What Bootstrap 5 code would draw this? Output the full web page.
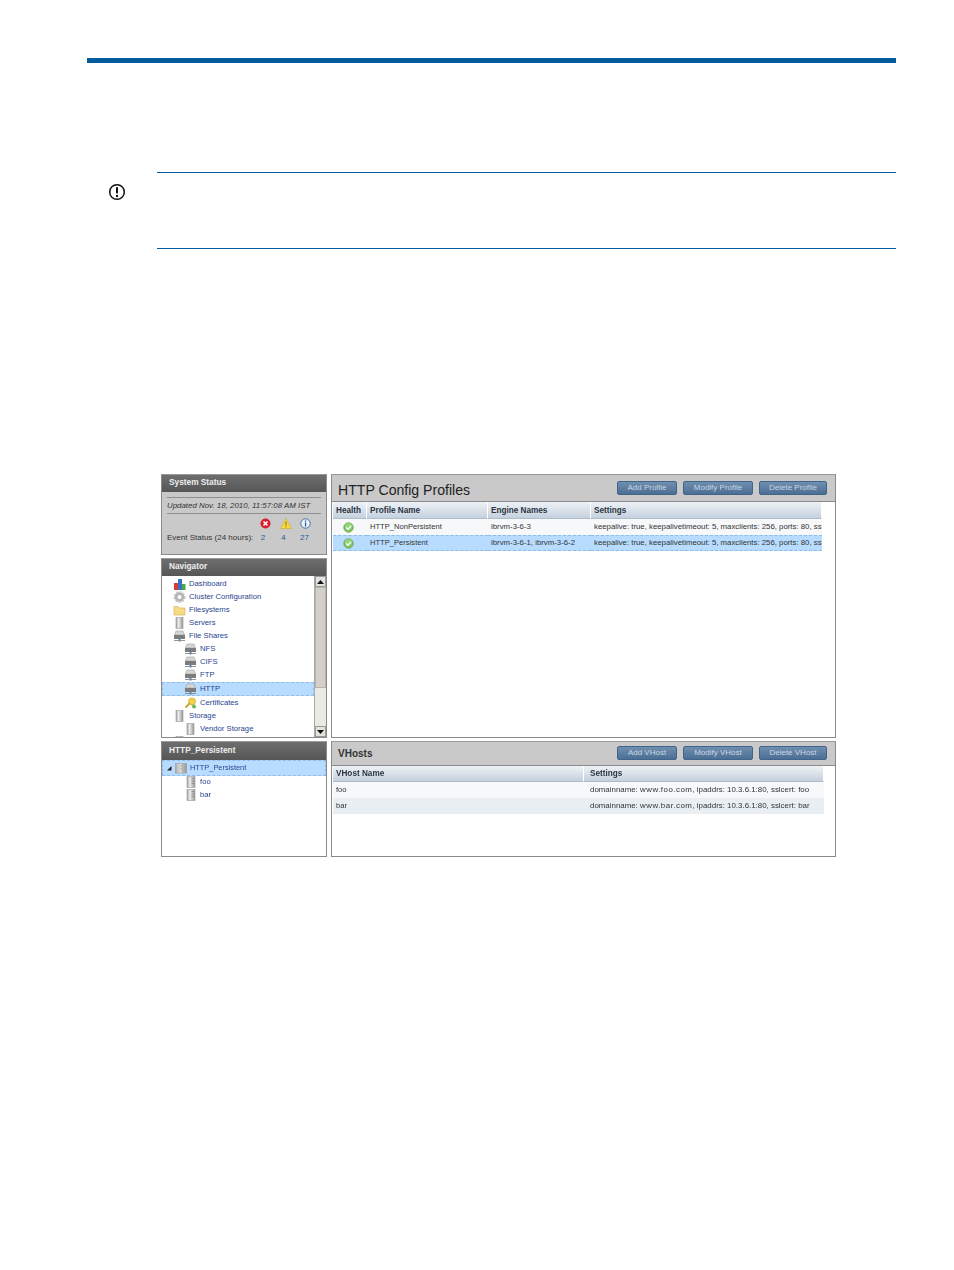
<!DOCTYPE html>
<html lang="en">
<head>
<meta charset="utf-8">
<title>HTTP Config Profiles</title>
<link href="https://cdn.jsdelivr.net/npm/bootstrap@5.3.0/dist/css/bootstrap.min.css" rel="stylesheet">
<style>
body{background:#fff;font-family:"Liberation Sans",Arial,sans-serif;color:#222;margin:0}
.pg{padding:58px 58px 0 87px}
.toprule{height:5px;background:#005a9c}
.note{margin-top:109px;display:flex}
.note-ic{width:70px;padding:7px 0 0 21px;height:76px}
.note-body{flex:1;height:77px;border-top:1px solid #005a9c;border-bottom:1px solid #005a9c}
.shot{margin:225px 0 0 74px;width:675px;display:grid;grid-template-columns:166px 505px;column-gap:4px;grid-template-rows:264px 116px;row-gap:3px;font-size:7.7px;line-height:1;filter:blur(.3px)}
.leftcol{display:flex;flex-direction:column;gap:3px;min-height:0}
.pnl{border:1px solid #8a8a8a;border-top-color:#999;background:#fff;overflow:hidden;position:relative}
.hd{height:17px;background:linear-gradient(#6e6e6e,#565656);color:#eee;font-weight:700;padding:0 0 2px 7px;display:flex;align-items:center;font-size:8.3px}
.status{height:81px;background:#c9c9c9}
.stline{margin:5px 5px 0;border-top:1px solid #8f8f8f;border-bottom:1px solid #8f8f8f;height:17px;display:flex;align-items:center;font-style:italic;color:#333;font-size:7.900px;white-space:nowrap}
.evgrid{display:grid;grid-template-columns:88px 21px 20px 19px;padding:4px 0 0 5px;color:#333;row-gap:5px;justify-items:center;align-items:center;font-size:8px}
.evgrid .lbl{justify-self:start;white-space:nowrap}
.evgrid .num{color:#2c5a94;margin-right:5px}
.evgrid .num.w{margin-right:2px}
.navp{height:180px}
.treewrap{display:flex;height:161px;overflow:hidden}
.tree{flex:1;padding-top:1px;min-width:0;overflow:hidden}
.trow{height:13.1px;display:flex;align-items:center;color:#2a4590;white-space:nowrap;padding-left:11px;gap:3px}
.trow svg{flex:none}
.trow.l2{padding-left:22px}
.trow.sel{background:#b8dcff;outline:1px dashed #8fbde8;outline-offset:-1px;height:14.5px}
.sbar{width:12px;background:#ebe9e3;display:flex;flex-direction:column;justify-content:space-between;border-left:1px solid #aaa}
.sbtn{height:11px;background:#e4e2dc;border:1px solid #999;display:flex;align-items:center;justify-content:center}
.sthumb{flex:1;background:#d2d0c8;border:1px solid #b5b3ab;margin-bottom:38px}
.strack{flex:1;display:flex;flex-direction:column}
.tree2{height:116px}
.tree2 .hd{height:18px}
.rootrow{padding-left:4px;gap:3px;height:15.500px}
.rootrow.sel{height:15.500px;font-size:7.400px}
.trow.leaf{padding-left:24px;gap:4px;margin-top:0}
.phd{background:#c9c9c9;display:flex;align-items:center;justify-content:space-between;border-bottom:1px solid #8a8a8a}
.phd1{height:27px}
.phd1 .ttl{padding-top:4px}
.phd1+.gridtbl .gh{height:17px;padding-top:2px}
.phd2{height:24px}
.phd2 .acts{padding-bottom:2px}
.ttl{font-size:14.100px;color:#222;padding-left:6px;padding-top:3px}
.ttl2{font-size:10px;font-weight:700;padding-left:6px;color:#333}
.acts{display:flex;gap:6px;padding-right:8px}
.pbtn{height:14px;background:linear-gradient(#6f8fae,#4b6e94);border:1px solid #41658a;border-radius:2px;color:#c9d6e3;font-size:8px;padding:0;display:flex;align-items:center;justify-content:center}
.bw1{width:60px}.bw2{width:70px}.bw3{width:68px}
.gridtbl{display:grid;margin-left:1px;color:#333}
.cols1{grid-template-columns:34px 121px 103px 231px}
.cols2{grid-template-columns:251px 240px}
.gh{height:16px;background:linear-gradient(#eef2f6,#c5d1de);font-weight:700;font-size:8.200px;display:flex;align-items:center;padding:1px 0 0 3px;border-right:1px solid #fff;border-bottom:1px solid #b0bcc8;white-space:nowrap;overflow:hidden;color:#2b3440}
.gc{height:16px;display:flex;align-items:center;padding-left:3px;white-space:nowrap;overflow:hidden;color:#333;font-size:7.600px}
.gc.wide{font-size:7.800px}
.gc.wider{font-size:7.900px}
.gc.c{justify-content:center;padding:0 3px 0 0}
.gc.alt{background:#f6f8fa}
.gc.sel{background:#b8dcff;border-top:1px dashed #8fbde8;border-bottom:1px dashed #8fbde8}
.gc.alt2{background:#e9eef3}
.pl6{padding-left:6px}
.sp{letter-spacing:.5px}
</style>
</head>
<body>
<svg width="0" height="0" class="position-absolute">
<defs>
<linearGradient id="cy" x1="0" x2="1" y1="0" y2="0"><stop offset="0" stop-color="#9a9a9a"/><stop offset=".35" stop-color="#eee"/><stop offset=".7" stop-color="#c0c0c0"/><stop offset="1" stop-color="#8e8e8e"/></linearGradient>
<symbol id="srv" viewBox="0 0 13 12"><path d="M1.500 5 3 1h7l1.500 4z" fill="#d6d6d6" stroke="#a0a0a0" stroke-width=".6"/><rect x="1" y="5" width="11" height="4" fill="#7c7c7c"/><rect x="5.500" y="9" width="2" height="2.500" fill="#4a80c0"/><rect x="1" y="10" width="11" height=".9" fill="#8a8a8a"/></symbol>
<symbol id="stor" viewBox="0 0 10 12"><rect x="1.500" y=".5" width="7" height="11" fill="url(#cy)" stroke="#a5a5a5" stroke-width=".7"/></symbol>
<symbol id="doc" viewBox="0 0 10 12"><rect x="1" y=".5" width="8" height="11" fill="url(#cy)" stroke="#a5a5a5" stroke-width=".7"/><path d="M5.500 2.500h2.500M5.500 5h2.500M5.500 7.500h2.500" stroke="#8a8a8a" stroke-width=".8"/></symbol>
<symbol id="root" viewBox="0 0 13 12"><rect x=".5" y="1" width="12" height="10.500" fill="url(#cy)" stroke="#a5a5a5" stroke-width=".7"/><path d="M4.500 1v10.500M8.500 1v10.500" stroke="#999" stroke-width=".7"/><path d="M6 4h1.500M6 7h1.500" stroke="#6aa85a" stroke-width=".9"/></symbol>
<symbol id="ok" viewBox="0 0 12 12"><circle cx="6" cy="6" r="5.200" fill="#7cc45a" stroke="#5a9c42" stroke-width=".7"/><circle cx="6" cy="5" r="3.800" fill="#a6dd8c" opacity=".6"/><path d="M3.500 6 5.400 8 8.700 4.200" fill="none" stroke="#fff" stroke-width="1.500"/></symbol>
</defs>
</svg>
<div class="pg">
<div class="toprule"></div>
<div class="note">
<div class="note-ic"><svg width="18" height="18" viewBox="0 0 18 18"><circle cx="9" cy="9" r="7.300" fill="none" stroke="#111" stroke-width="1.500"/><rect x="8" y="4" width="2" height="6.500" rx=".8" fill="#111"/><circle cx="9" cy="13" r="1.200" fill="#111"/></svg></div>
<div class="note-body"></div>
</div>
<div class="shot">
<div class="leftcol">
<div class="pnl status">
<div class="hd">System Status</div>
<div class="stline">Updated Nov. 18, 2010, 11:57:08 AM IST</div>
<div class="evgrid">
<span></span>
<svg width="11" height="11" viewBox="0 0 11 11"><circle cx="5.500" cy="5.500" r="5" fill="#d8202a"/><path d="M3.500 3.500l4 4M7.500 3.500l-4 4" stroke="#fff" stroke-width="1.600"/></svg>
<svg width="12" height="11" viewBox="0 0 12 11"><path d="M6 .5 11.500 10.500H.5z" fill="#f6d843" stroke="#c9a92a" stroke-width=".6"/><rect x="5.500" y="3.500" width="1" height="4" fill="#8a6d10"/><rect x="5.500" y="8.200" width="1" height="1" fill="#8a6d10"/></svg>
<svg width="11" height="11" viewBox="0 0 11 11"><circle cx="5.500" cy="5.500" r="4.700" fill="#eef3fb" stroke="#4a6ea8"/><rect x="4.900" y="4.500" width="1.300" height="4" fill="#2c5a94"/><rect x="4.900" y="2.500" width="1.300" height="1.300" fill="#2c5a94"/></svg>
<span class="lbl">Event Status (24 hours):</span><span class="num">2</span><span class="num">4</span><span class="num w">27</span>
</div>
</div>
<div class="pnl navp">
<div class="hd">Navigator</div>
<div class="treewrap">
<div class="tree">
<div class="trow"><svg width="13" height="12" viewBox="0 0 13 12"><rect x="1" y="5" width="4" height="7" fill="#d8383a"/><rect x="5" y="1" width="4" height="11" fill="#3a70c0"/><rect x="9" y="6" width="3.500" height="6" fill="#4aa84a"/></svg>Dashboard</div>
<div class="trow"><svg width="13" height="12" viewBox="0 0 13 12"><circle cx="6.500" cy="6" r="3.400" fill="none" stroke="#b5b5b5" stroke-width="2.800"/><circle cx="6.500" cy="6" r="5.300" fill="none" stroke="#c2c2c2" stroke-width="1.400" stroke-dasharray="2 1.500"/></svg>Cluster Configuration</div>
<div class="trow"><svg width="13" height="12" viewBox="0 0 13 12"><path d="M1 2.500h4l1 1.500h6v7H1z" fill="#f6dc84" stroke="#d2b45e" stroke-width=".7"/></svg>Filesystems</div>
<div class="trow"><svg width="13" height="12"><use href="#stor"/></svg>Servers</div>
<div class="trow"><svg width="13" height="12"><use href="#srv"/></svg>File Shares</div>
<div class="trow l2"><svg width="13" height="12"><use href="#srv"/></svg>NFS</div>
<div class="trow l2"><svg width="13" height="12"><use href="#srv"/></svg>CIFS</div>
<div class="trow l2"><svg width="13" height="12"><use href="#srv"/></svg>FTP</div>
<div class="trow l2 sel"><svg width="13" height="12"><use href="#srv"/></svg>HTTP</div>
<div class="trow l2"><svg width="13" height="12" viewBox="0 0 13 12"><circle cx="8" cy="4.500" r="3.500" fill="#f2d24c" stroke="#c9aa34" stroke-width=".7"/><path d="M6 6 1.500 10.500" stroke="#c9aa34" stroke-width="2"/><circle cx="10" cy="9.500" r="2" fill="#6cb85a"/></svg>Certificates</div>
<div class="trow"><svg width="13" height="12"><use href="#stor"/></svg>Storage</div>
<div class="trow l2"><svg width="13" height="12"><use href="#stor"/></svg>Vendor Storage</div>
<div class="trow"><svg width="13" height="12"><use href="#stor"/></svg></div>
</div>
<div class="sbar">
<div class="sbtn"><svg width="7" height="4" viewBox="0 0 7 4"><path d="M3.500 0 7 4H0z" fill="#111"/></svg></div>
<div class="strack"><div class="sthumb"></div></div>
<div class="sbtn"><svg width="7" height="4" viewBox="0 0 7 4"><path d="M3.500 4 7 0H0z" fill="#111"/></svg></div>
</div>
</div>
</div>
</div>
<div class="pnl">
<div class="phd phd1">
<div class="ttl">HTTP Config Profiles</div>
<div class="acts"><button class="pbtn bw1">Add Profile</button><button class="pbtn bw2">Modify Profile</button><button class="pbtn bw3">Delete Profile</button></div>
</div>
<div class="gridtbl cols1">
<div class="gh">Health</div><div class="gh">Profile Name</div><div class="gh">Engine Names</div><div class="gh">Settings</div>
<div class="gc c alt"><svg width="11" height="11"><use href="#ok"/></svg></div><div class="gc alt">HTTP_NonPersistent</div><div class="gc alt wide">ibrvm-3-6-3</div><div class="gc alt wide">keepalive: true, keepalivetimeout: 5, maxclients: 256, ports: 80, ss</div>
<div class="gc c sel"><svg width="11" height="11"><use href="#ok"/></svg></div><div class="gc sel">HTTP_Persistent</div><div class="gc sel wide">ibrvm-3-6-1, ibrvm-3-6-2</div><div class="gc sel wide">keepalive: true, keepalivetimeout: 5, maxclients: 256, ports: 80, ss</div>
</div>
</div>
<div class="pnl tree2">
<div class="hd">HTTP_Persistent</div>
<div class="trow sel rootrow"><svg width="6" height="6" viewBox="0 0 6 6"><path d="M5.500 1v4.500H1z" fill="#222"/></svg><svg width="12" height="12"><use href="#root"/></svg>HTTP_Persistent</div>
<div class="trow leaf"><svg width="10" height="12"><use href="#doc"/></svg>foo</div>
<div class="trow leaf"><svg width="10" height="12"><use href="#doc"/></svg>bar</div>
</div>
<div class="pnl">
<div class="phd phd2">
<div class="ttl2">VHosts</div>
<div class="acts"><button class="pbtn bw1">Add VHost</button><button class="pbtn bw2">Modify VHost</button><button class="pbtn bw3">Delete VHost</button></div>
</div>
<div class="gridtbl cols2">
<div class="gh">VHost Name</div><div class="gh pl6">Settings</div>
<div class="gc alt">foo</div><div class="gc alt wider pl6"><span>domainname: <span class="sp">www.foo.com</span>, ipaddrs: 10.3.6.1:80, sslcert: foo</span></div>
<div class="gc alt2">bar</div><div class="gc alt2 wider pl6"><span>domainname: <span class="sp">www.bar.com</span>, ipaddrs: 10.3.6.1:80, sslcert: bar</span></div>
</div>
</div>
</div>
</div>
<script src="https://cdn.jsdelivr.net/npm/bootstrap@5.3.0/dist/js/bootstrap.bundle.min.js"></script>
</body>
</html>
